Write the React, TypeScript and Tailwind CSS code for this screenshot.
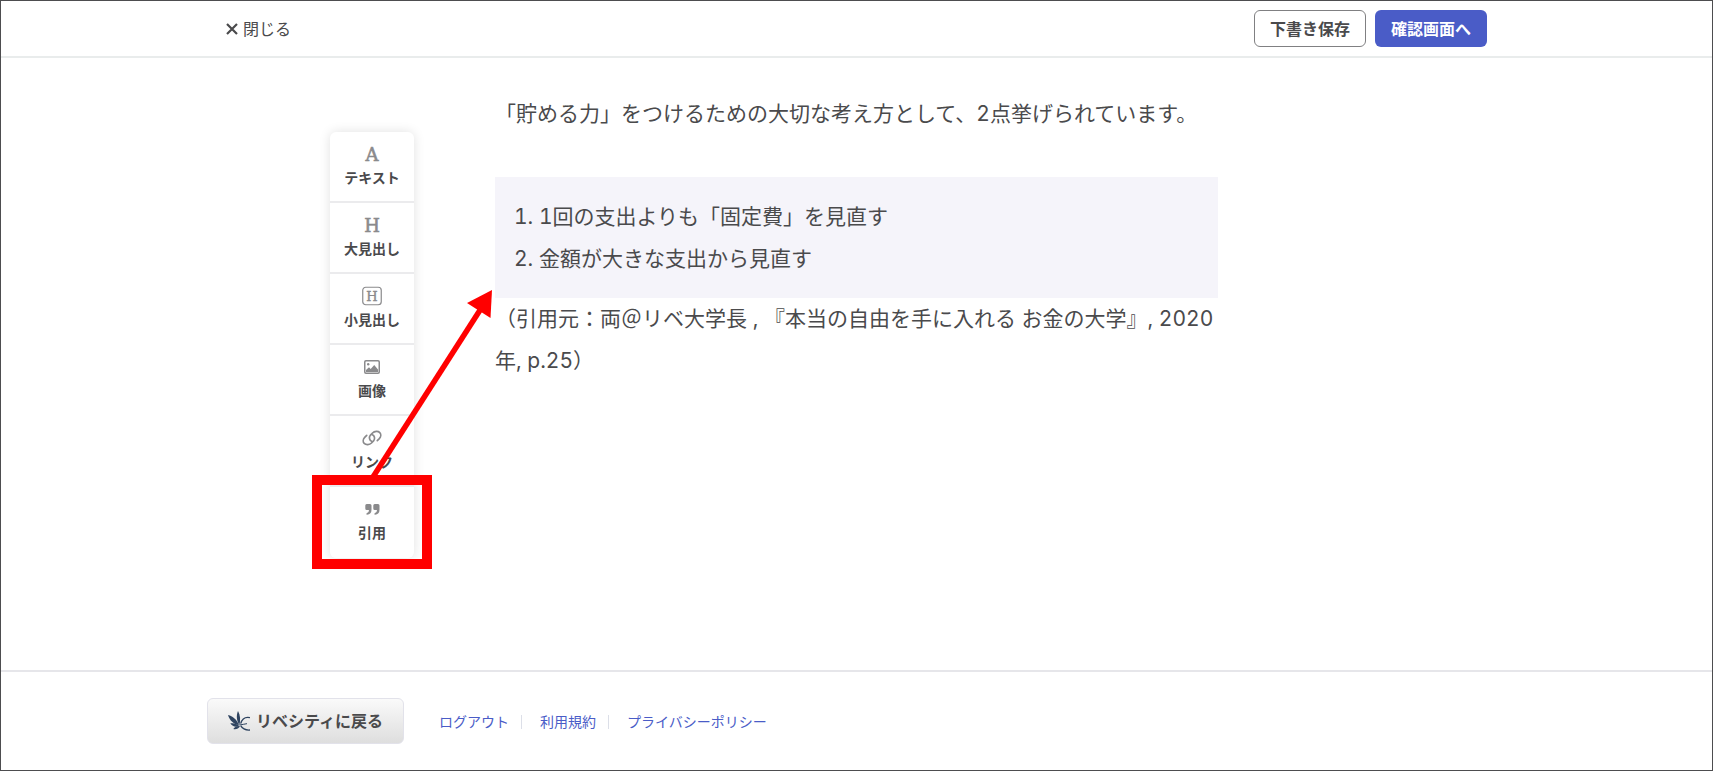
import type { ReactNode } from 'react';

const TOOLS: { label: string; icon: ReactNode }[] = [
  { label: 'テキスト', icon: <LetterIcon letter="A" /> },
  { label: '大見出し', icon: <LetterIcon letter="H" /> },
  { label: '小見出し', icon: <BoxedLetterIcon letter="H" /> },
  { label: '画像', icon: <ImageIcon /> },
  { label: 'リンク', icon: <LinkIcon /> },
  { label: '引用', icon: <QuoteIcon /> },
];

const FOOTER_LINKS = ['ログアウト', '利用規約', 'プライバシーポリシー'];

export default function App() {
  return (
    <div className="flex min-h-screen flex-col border border-[#4d4d4f] bg-white font-['Inter','Noto_Sans_CJK_JP',sans-serif] text-[#4a4a4c]">
      <Header />
      <main className="grid flex-1 grid-cols-[1fr_minmax(0,723px)_1fr] items-start">
        <Toolbar />
        <Article />
      </main>
      <Footer />
    </div>
  );
}

function Header() {
  return (
    <header className="border-b-2 border-[#e9ecec]">
      <div className="mx-auto flex h-[55px] max-w-[1261px] items-center justify-between">
        <button type="button" className="flex items-center gap-[5px] text-base">
          <svg viewBox="0 0 12 12" className="size-3" fill="none" stroke="currentColor" strokeWidth="2.2">
            <path d="M1 1 11 11M11 1 1 11" />
          </svg>
          閉じる
        </button>
        <div className="flex gap-[9px] text-base font-bold">
          <button type="button" className="h-[37px] w-28 rounded-md border border-[#808082]">
            下書き保存
          </button>
          <button type="button" className="h-[37px] w-28 rounded-md bg-[#4a5cc7] text-white">
            確認画面へ
          </button>
        </div>
      </div>
    </header>
  );
}

function Toolbar() {
  return (
    <aside className="relative mt-[74px] mr-[81px] w-[84px] justify-self-end">
      <div className="divide-y-2 divide-[#ebebed] rounded-md bg-white shadow-[0_0_12px_rgba(0,0,0,0.12)]">
        {TOOLS.map(({ label, icon }) => (
          <button key={label} type="button" className="flex h-[71px] w-full flex-col items-center gap-[5px] pt-3">
            <span className="flex h-5 items-center text-[#8a8a8c]">{icon}</span>
            <span className="text-sm leading-[18px] font-bold">{label}</span>
          </button>
        ))}
      </div>
      <Callout />
    </aside>
  );
}

// frame around the quote tool, arrow up to the quote block
function Callout() {
  return (
    <svg
      viewBox="0 0 180 279"
      className="pointer-events-none absolute top-[158px] left-[-18px] h-[279px] w-[180px]"
      aria-hidden="true"
    >
      <rect x="5" y="190" width="110" height="84" fill="none" stroke="#ff0000" strokeWidth="10" />
      <path d="M61 187 170 17" stroke="#ff0000" strokeWidth="5.5" />
      <path d="M180 0 155 13 178.500 28Z" fill="#ff0000" />
    </svg>
  );
}

function Article() {
  return (
    <article className="pt-[35px] text-[21px] leading-[42px] tabular-nums">
      <p className="mb-[42px]">「貯める力」をつけるための大切な考え方として、2点挙げられています。</p>
      <blockquote className="bg-[#f5f4fa] px-[19px] pt-[19px] pb-[18px]">
        <p>1. 1回の支出よりも「固定費」を見直す</p>
        <p>2. 金額が大きな支出から見直す</p>
      </blockquote>
      <p>（引用元：両＠リベ大学長 , 『本当の自由を手に入れる お金の大学』, 2020年, p.25）</p>
    </article>
  );
}

function Footer() {
  return (
    <footer className="border-t-2 border-[#e6e6ea]">
      <div className="mx-auto flex max-w-[1299px] items-center gap-[35px] py-[26px]">
        <button
          type="button"
          className="flex h-[46px] w-[197px] items-center justify-center gap-1.5 rounded-md border border-[#e2e2ea] bg-linear-to-b from-[#fafafa] to-[#dedede] text-base font-bold"
        >
          <FeatherLogo />
          リベシティに戻る
        </button>
        <nav className="flex items-center pt-0.5 text-sm text-[#4a5cc7]">
          {FOOTER_LINKS.map((text, i) => (
            <a
              key={text}
              href="#"
              className={i === 0 ? 'leading-[14px]' : 'ml-3 border-l border-[#dcdfe8] pl-[18px] leading-[14px]'}
            >
              {text}
            </a>
          ))}
        </nav>
      </div>
    </footer>
  );
}

function LetterIcon({ letter }: { letter: string }) {
  return (
    <svg viewBox="0 0 20 20" className="size-5 font-['DejaVu_Serif',serif] text-lg" aria-hidden="true">
      <text x="10" y="17" textAnchor="middle" fill="currentColor" stroke="currentColor" strokeWidth="0.6">
        {letter}
      </text>
    </svg>
  );
}

function BoxedLetterIcon({ letter }: { letter: string }) {
  return (
    <svg viewBox="0 0 20 20" className="size-5 font-['DejaVu_Serif',serif] text-[13px]" aria-hidden="true">
      <rect x="0.75" y="1.25" width="18.5" height="17.5" rx="3" fill="none" stroke="currentColor" strokeWidth="1.2" />
      <text x="10" y="15" textAnchor="middle" fill="currentColor" stroke="currentColor" strokeWidth="0.4">
        {letter}
      </text>
    </svg>
  );
}

function ImageIcon() {
  return (
    <svg viewBox="0 0 16 14" className="h-[14px] w-4" fill="none">
      <rect x="0.75" y="0.75" width="14.5" height="12.5" rx="1.2" stroke="currentColor" strokeWidth="1.5" />
      <circle cx="4.2" cy="4.3" r="1.2" fill="currentColor" />
      <path d="M2 12V10L5 7.2 6.700 9 10.200 5 14 9.500V12Z" fill="currentColor" />
    </svg>
  );
}

function LinkIcon() {
  return (
    <svg viewBox="0 0 20 16" className="h-4 w-5" fill="none" stroke="currentColor" strokeWidth="1.7" strokeLinecap="round">
      <path d="M9.600 11.200C7.600 10.500 6.600 7.500 8.300 5.300L10.500 3C12.500 1 16 .8 17.800 2.600 19.300 4.200 19 6.800 17.300 8.600L15.300 10.600" />
      <path d="M10.400 4.800C12.400 5.500 13.400 8.500 11.700 10.700L9.500 13C7.500 15 4 15.200 2.200 13.400 .7 11.800 1 9.200 2.700 7.400L4.700 5.400" />
    </svg>
  );
}

function QuoteIcon() {
  return (
    <svg viewBox="0 0 15 11" className="h-[11px] w-[15px]" fill="currentColor">
      <path d="M1.700 0H5Q6.500 0 6.500 1.500V5.800Q6.500 10.500 2 10.800Q1.500 10.800 1.500 10.300V9.500Q1.500 9 2 8.900Q4 8.500 4 6H1.700Q.300 6 .300 4.500V1.500Q.300 0 1.700 0Z" />
      <path d="M9.700 0H13Q14.500 0 14.500 1.500V5.800Q14.500 10.500 10 10.800Q9.500 10.800 9.500 10.300V9.500Q9.500 9 10 8.900Q12 8.500 12 6H9.700Q8.300 6 8.300 4.500V1.500Q8.300 0 9.700 0Z" />
    </svg>
  );
}

function FeatherLogo() {
  return (
    <svg viewBox="0 0 66 60" className="h-5 w-[22px]" fill="none">
      <g fill="#2f4460">
        <path d="M30 0C37 12 38 28 34 42 26 30 24 14 30 0Z" />
        <path d="M0 12C14 15 27 26 33 43 17 39 5 29 0 12Z" />
        <path d="M7 37C17 35 27 38 34 45 23 50 13 47 7 37Z" />
        <path d="M16 54C20 47 27 44 36 45 32 53 24 56 16 54Z" />
      </g>
      <path d="M66 20C52 17 42 24 38 38" stroke="#2f4460" strokeWidth="4" />
      <path d="M34 42C42 40 50 40 57 38" stroke="#2f4460" strokeWidth="3" />
      <path d="M38 44C44 54 54 58 66 57" stroke="#2f4460" strokeWidth="4" />
    </svg>
  );
}
